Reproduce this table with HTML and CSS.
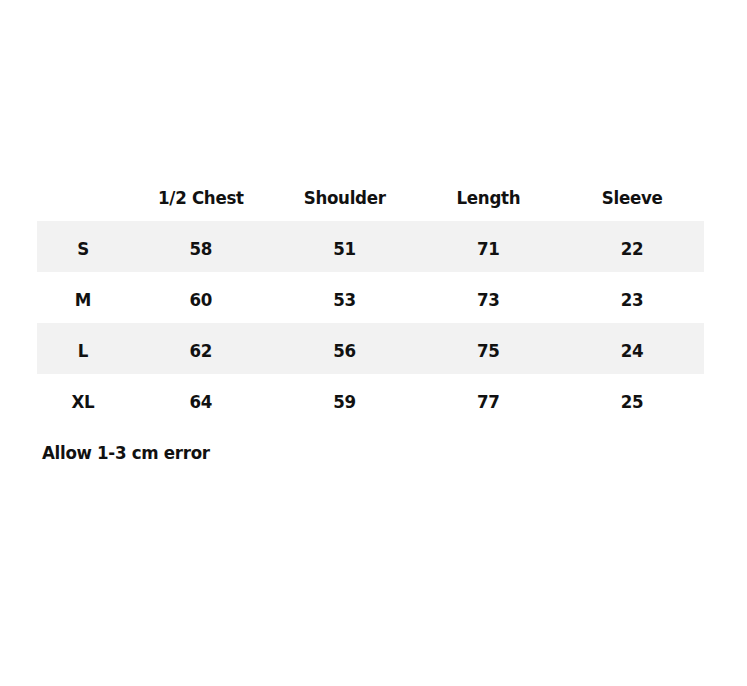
FILE: index.html
```html
<!DOCTYPE html>
<html>
<head>
<meta charset="utf-8">
<link rel="stylesheet" href="styles.css">
</head>
<body>
<div class="wrap">
  <table class="size">
    <thead>
      <tr><th class="c1"></th><th>1/2 Chest</th><th>Shoulder</th><th>Length</th><th>Sleeve</th></tr>
    </thead>
    <tbody>
      <tr class="alt"><td>S</td><td>58</td><td>51</td><td>71</td><td>22</td></tr>
      <tr><td>M</td><td>60</td><td>53</td><td>73</td><td>23</td></tr>
      <tr class="alt"><td>L</td><td>62</td><td>56</td><td>75</td><td>24</td></tr>
      <tr><td>XL</td><td>64</td><td>59</td><td>77</td><td>25</td></tr>
    </tbody>
  </table>
  <p class="note">Allow 1-3 cm error</p>
</div>
</body>
</html>
```
FILE: styles.css
```css
html, body { margin: 0; padding: 0; background: #fff; }
body {
  font-family: "DejaVu Sans", sans-serif;
  font-stretch: condensed;
  font-weight: bold;
  color: #111;
}
.wrap { padding: 170px 43px 0 37px; }
.size {
  width: 667px;
  border-collapse: collapse;
  table-layout: fixed;
}
.size th, .size td {
  height: 51px;
  padding: 3px 0 0 0;
  box-sizing: border-box;
  text-align: center;
  font-size: 18.5px;
  letter-spacing: -0.3px;
  font-weight: bold;
}
.size .c1 { width: 92px; }
.size tr.alt td { background: #f2f2f2; }
.note {
  margin: 0;
  padding: 0 0 0 5px;
  height: 55px;
  line-height: 55px;
  font-size: 18.5px;
  letter-spacing: -0.3px;
}
```
